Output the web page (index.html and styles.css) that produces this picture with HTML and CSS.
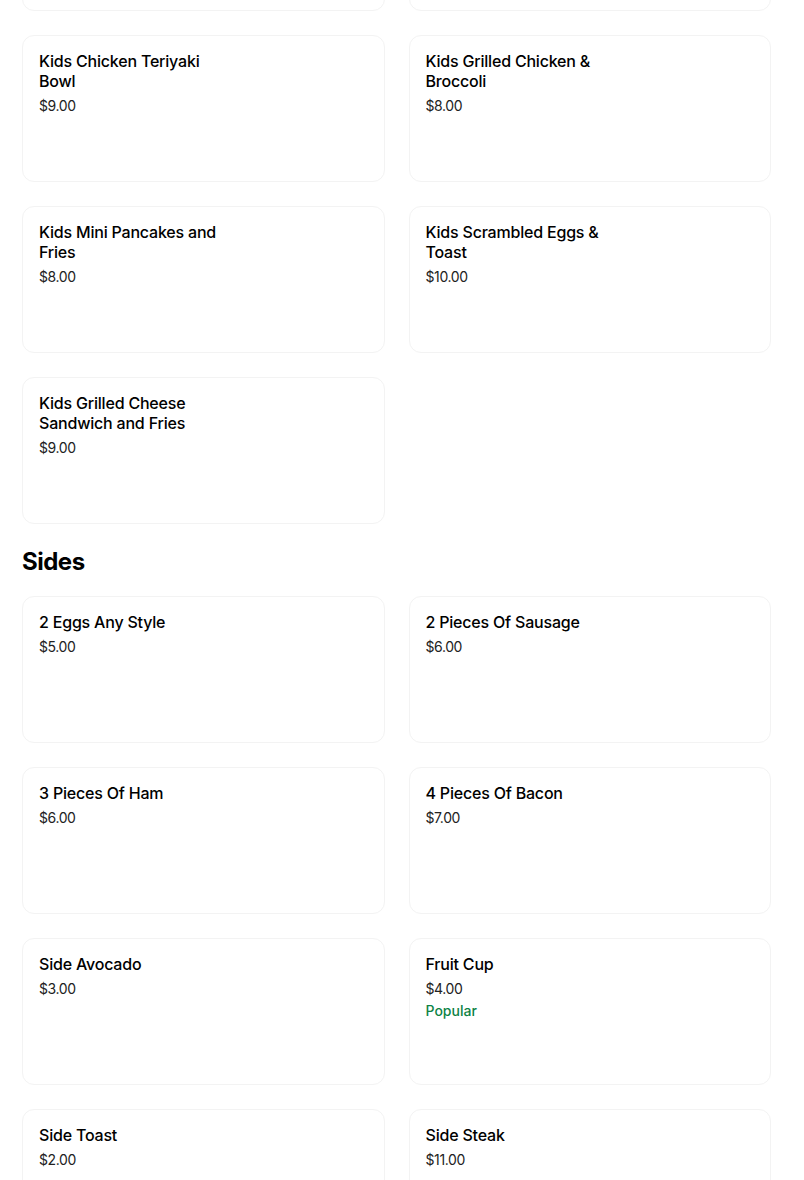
FILE: index.html
```html
<!DOCTYPE html>
<html lang="en">
<head>
  <meta charset="UTF-8" />
  <title>Menu</title>
  <link rel="stylesheet" href="styles.css">
</head>
<body>
  <main class="menu">
    <!-- Kids (scrolled, first row above the fold) -->
    <section class="menu-section menu-section--scrolled">
      <div class="item-grid">
        <div class="item-card"></div>
        <div class="item-card"></div>
        <div class="item-card">
          <div class="item-text">
            <h3 class="item-name">Kids Chicken Teriyaki Bowl</h3>
            <div class="item-price">$9.00</div>
          </div>
        </div>
        <div class="item-card">
          <div class="item-text">
            <h3 class="item-name">Kids Grilled Chicken &amp; Broccoli</h3>
            <div class="item-price">$8.00</div>
          </div>
        </div>
        <div class="item-card">
          <div class="item-text">
            <h3 class="item-name">Kids Mini Pancakes and Fries</h3>
            <div class="item-price">$8.00</div>
          </div>
        </div>
        <div class="item-card">
          <div class="item-text">
            <h3 class="item-name">Kids Scrambled Eggs &amp; Toast</h3>
            <div class="item-price">$10.00</div>
          </div>
        </div>
        <div class="item-card">
          <div class="item-text">
            <h3 class="item-name">Kids Grilled Cheese Sandwich and Fries</h3>
            <div class="item-price">$9.00</div>
          </div>
        </div>
      </div>
    </section>

    <section class="menu-section">
      <h2 class="section-title">Sides</h2>
      <div class="item-grid">
        <div class="item-card">
          <div class="item-text">
            <h3 class="item-name">2 Eggs Any Style</h3>
            <div class="item-price">$5.00</div>
          </div>
        </div>
        <div class="item-card">
          <div class="item-text">
            <h3 class="item-name">2 Pieces Of Sausage</h3>
            <div class="item-price">$6.00</div>
          </div>
        </div>
        <div class="item-card">
          <div class="item-text">
            <h3 class="item-name">3 Pieces Of Ham</h3>
            <div class="item-price">$6.00</div>
          </div>
        </div>
        <div class="item-card">
          <div class="item-text">
            <h3 class="item-name">4 Pieces Of Bacon</h3>
            <div class="item-price">$7.00</div>
          </div>
        </div>
        <div class="item-card">
          <div class="item-text">
            <h3 class="item-name">Side Avocado</h3>
            <div class="item-price">$3.00</div>
          </div>
        </div>
        <div class="item-card">
          <div class="item-text">
            <h3 class="item-name">Fruit Cup</h3>
            <div class="item-price">$4.00</div>
            <div class="item-badge">Popular</div>
          </div>
        </div>
        <div class="item-card">
          <div class="item-text">
            <h3 class="item-name">Side Toast</h3>
            <div class="item-price">$2.00</div>
          </div>
        </div>
        <div class="item-card">
          <div class="item-text">
            <h3 class="item-name">Side Steak</h3>
            <div class="item-price">$11.00</div>
          </div>
        </div>
      </div>
    </section>
  </main>
</body>
</html>
```

FILE: styles.css
```css
* { box-sizing: border-box; margin: 0; padding: 0; }
body {
  background: #fff;
  color: #000;
  font-family: "Inter", "Liberation Sans", sans-serif;
  overflow: hidden;
}
.menu {
  padding: 0 33px 0 22px;
}
/* page is scrolled: the first row of cards sits above the top edge */
.menu-section--scrolled {
  margin-top: -136px;
}
.section-title {
  font-size: 24px;
  line-height: 28px;
  font-weight: 700;
  letter-spacing: -0.5px;
  margin: 24px 0 20px 0;
}
.item-grid {
  display: grid;
  grid-template-columns: 1fr 1fr;
  gap: 24px 24px;
}
.item-card {
  height: 147px;
  border: 1px solid #f3f3f3;
  border-radius: 12px;
  padding: 15px 16px;
  background: #fff;
}
.item-text {
  max-width: 190px;
}
.item-name {
  font-size: 16px;
  line-height: 20px;
  font-weight: 500;
  letter-spacing: -0.2px;
  color: #000;
}
.item-price {
  font-size: 14px;
  line-height: 20px;
  margin-top: 5px;
  color: #222;
  letter-spacing: -0.4px;
}
.item-badge {
  font-size: 14px;
  line-height: 20px;
  margin-top: 2px;
  font-weight: 500;
  color: #0e8345;
}
```
